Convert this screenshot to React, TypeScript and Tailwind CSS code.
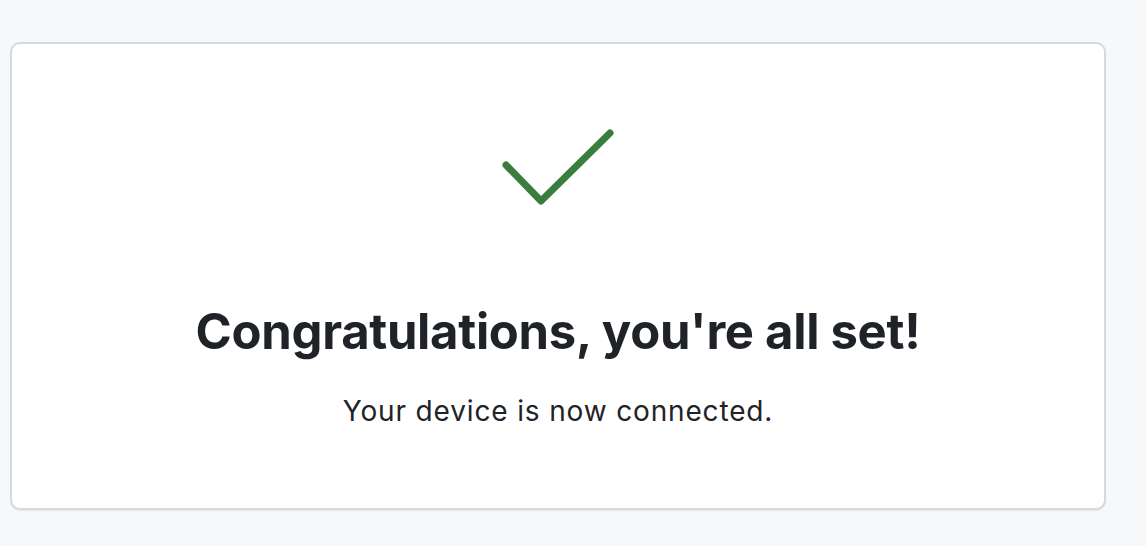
export default function App() {
  return (
    <div className="min-h-[546px] w-full bg-[#f6f8fa] pt-[42px] pl-[10px] pr-[40px] pb-[36px]" style={{ fontFamily: 'Inter, "Noto Sans", "Liberation Sans", sans-serif' }}>
      <div className="h-[468px] w-[1096px] rounded-[10px] border-2 border-[#d3d9df] bg-white shadow-[0_1px_1px_rgba(31,35,40,0.08)] flex flex-col items-center pt-[85px]">
        <svg width="120" height="84" viewBox="0 0 120 84" className="block">
          <path d="M8 36 L43 72 L112 4" fill="none" stroke="#3a7d3e" strokeWidth="7" strokeLinecap="round" strokeLinejoin="round" />
        </svg>
        <h1 className="mt-[91px] text-[49px] leading-[56px] font-bold text-[#1f2328] tracking-[-0.3px]">Congratulations, you're all set!</h1>
        <p className="mt-[35px] text-[28px] leading-[32px] text-[#1f2328] tracking-[0.85px]">Your device is now connected.</p>
      </div>
    </div>
  );
}
